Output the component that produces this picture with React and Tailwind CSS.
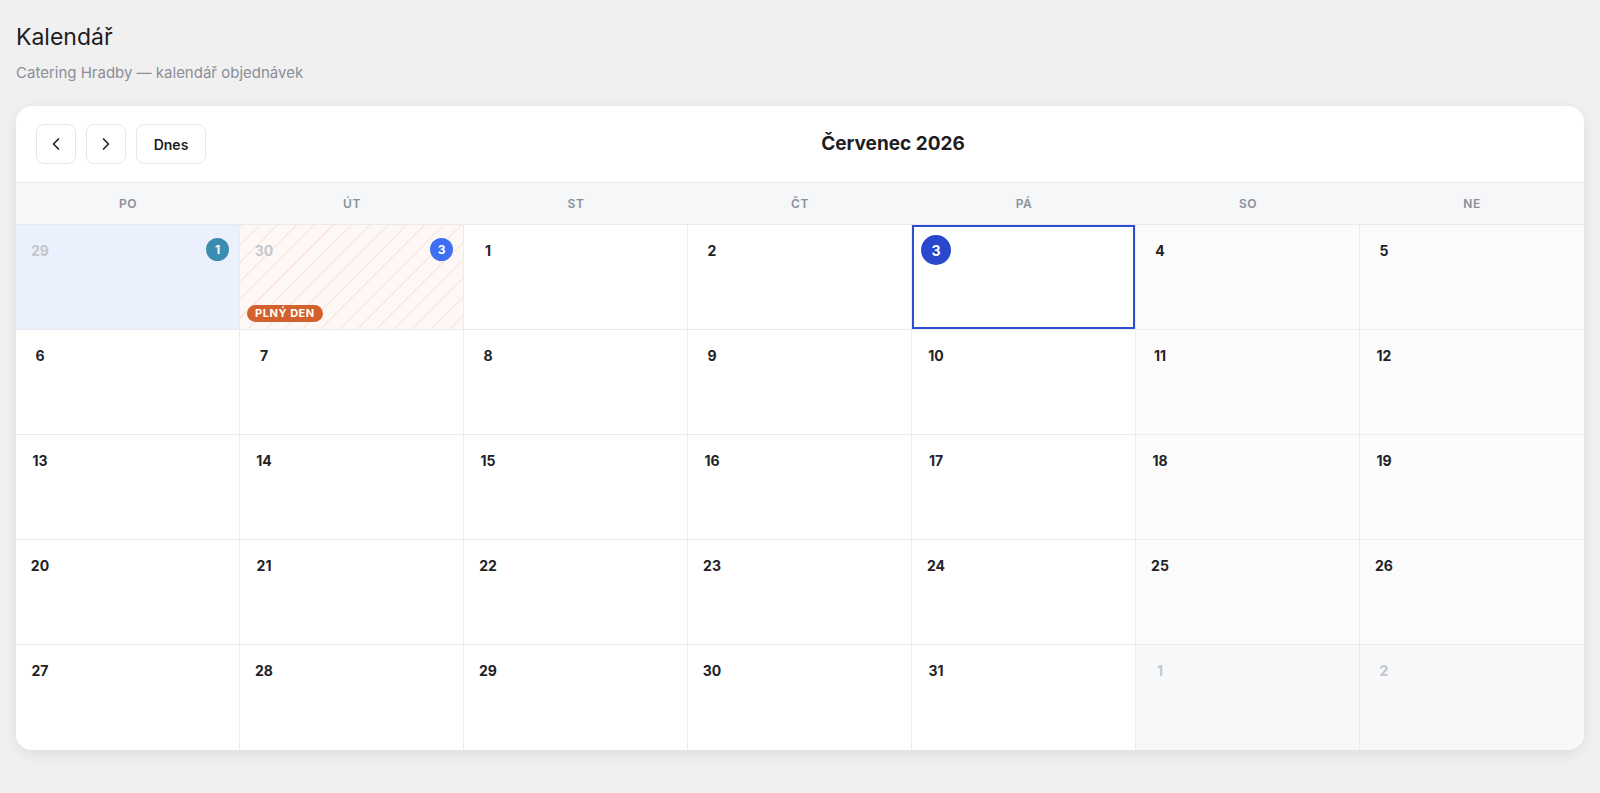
import React from "react";

const ChevronLeft = () => (
  <svg width="20" height="20" viewBox="0 0 24 24" fill="none" stroke="#222" strokeWidth="2" strokeLinecap="round" strokeLinejoin="round"><path d="M15 18l-6-6 6-6" /></svg>
);
const ChevronRight = () => (
  <svg width="20" height="20" viewBox="0 0 24 24" fill="none" stroke="#222" strokeWidth="2" strokeLinecap="round" strokeLinejoin="round"><path d="M9 18l6-6-6-6" /></svg>
);

const days = ["PO", "ÚT", "ST", "ČT", "PÁ", "SO", "NE"];

function buildCells() {
  const cells = [];
  cells.push({ d: 29, out: true, kind: "booked", badge: 1, badgeColor: "bg-[#3a8db0]" });
  cells.push({ d: 30, out: true, kind: "full", badge: 3, badgeColor: "bg-[#3d6ef3]" });
  for (let i = 1; i <= 31; i++) cells.push({ d: i, out: false, today: i === 3 });
  cells.push({ d: 1, out: true });
  cells.push({ d: 2, out: true });
  return cells;
}

export default function App() {
  const cells = buildCells();
  return (
    <div className="min-h-[793px] bg-[#f0f0f1] px-4 pt-[21px] pb-10" style={{ fontFamily: "Inter, 'Noto Sans', sans-serif" }}>
      <h1 className="text-[23px] leading-8 text-[#1d1d1f] font-normal">Kalendář</h1>
      <p className="mt-[10px] text-[15px] leading-5 text-[#8a8e96]">Catering Hradby — kalendář objednávek</p>
      <div className="mt-[23px] bg-white rounded-2xl shadow-[0_4px_14px_rgba(0,0,0,0.08)] overflow-hidden">
        <div className="h-[76px] px-5 flex items-center gap-4">
          <div className="flex items-center gap-2.5">
            <button className="w-10 h-10 rounded-lg border border-[#e6e7ea] bg-white flex items-center justify-center"><ChevronLeft /></button>
            <button className="w-10 h-10 rounded-lg border border-[#e6e7ea] bg-white flex items-center justify-center"><ChevronRight /></button>
            <button className="h-10 w-[70px] rounded-lg border border-[#e6e7ea] bg-white text-[14px] font-semibold text-[#1d1d1f]">Dnes</button>
          </div>
          <div className="flex-1 text-center text-[19px] font-bold text-[#1d1d1f]">Červenec 2026</div>
        </div>
        <div className="grid grid-cols-7 h-[43px] bg-[#f5f7f9] border-y border-[#e8eaed]">
          {days.map((d) => (
            <div key={d} className="flex items-center justify-center text-[12px] font-semibold tracking-wider text-[#8b9099]">{d}</div>
          ))}
        </div>
        <div className="grid grid-cols-7">
          {cells.map((c, i) => {
            const col = i % 7;
            const row = Math.floor(i / 7);
            const weekend = col >= 5;
            let bg = weekend ? "bg-[#fbfbfc]" : "bg-white";
            if (c.out) bg = "bg-[#f6f8fa]";
            if (c.kind === "booked") bg = "bg-[#ebf0fd]";
            const borders = `${col < 6 ? "border-r" : ""} ${row < 4 ? "border-b" : ""} border-[#ececee]`;
            return (
              <div key={i} className={`relative h-[105px] ${bg} ${borders} ${c.today ? "ring-2 ring-inset ring-[#2d4ed0]" : ""}`}>
                {c.kind === "full" && (
                  <div className="absolute inset-0 bg-[#fdf8f5] bg-[repeating-linear-gradient(135deg,#fbe8df_0px,#fbe8df_1.5px,transparent_1.5px,transparent_13px)]" />
                )}
                <div className="relative pl-[9px] pt-[10px]">
                  <div
                    className={`w-[30px] h-[30px] rounded-full flex items-center justify-center text-[14px] font-bold ${
                      c.today ? "bg-[#2a48cc] text-white" : c.out ? "text-[#c4c7cc]" : "text-[#222326]"
                    }`}
                  >
                    {c.d}
                  </div>
                </div>
                {c.badge && (
                  <div className={`absolute top-[13px] right-[10px] w-[23px] h-[23px] rounded-full ${c.badgeColor} text-white text-[12px] font-bold flex items-center justify-center`}>
                    {c.badge}
                  </div>
                )}
                {c.kind === "full" && (
                  <div className="absolute left-[7px] bottom-[7px] h-[17px] px-[8px] rounded-full bg-[#d3612e] text-white text-[11px] font-bold tracking-wider flex items-center">
                    PLNÝ DEN
                  </div>
                )}
              </div>
            );
          })}
        </div>
      </div>
    </div>
  );
}
